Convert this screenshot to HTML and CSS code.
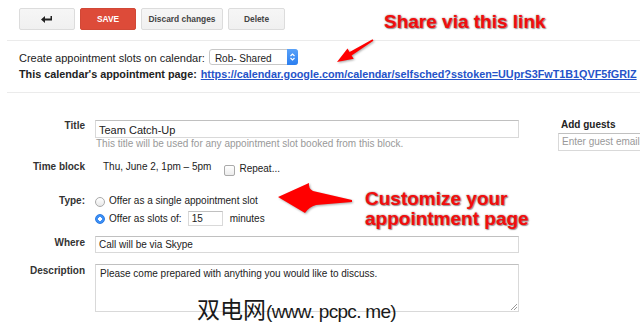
FILE: index.html
```html
<!DOCTYPE html>
<html lang="en">
<head>
    <meta charset="UTF-8" />
    <title>Appointment slots</title>
    <link rel="stylesheet" href="styles.css">
</head>
<body>

    <!-- Toolbar -->
    <div class="toolbar">
        <button class="btn btn-back">
            <svg width="12" height="8" viewBox="0 0 12 8">
                <path d="M0 4.5 L4 1 L4 3.5 L9.5 3.5 L9.5 1 L11 1 L11 5.5 L4 5.5 L4 8 Z" fill="#222"/>
            </svg>
        </button>
        <button class="btn btn-save">SAVE</button>
        <button class="btn btn-discard">Discard changes</button>
        <button class="btn btn-delete">Delete</button>
    </div>

    <!-- Calendar info -->
    <div class="calendar-info">
        <div class="info-row">
            <span>Create appointment slots on calendar:</span>
            <div class="select">
                <span class="select-text">Rob- Shared</span>
                <span class="stepper">
                    <svg width="7" height="10" viewBox="0 0 7 10">
                        <path d="M1.5 4 L3.5 2 L5.5 4 M1.5 6 L3.5 8 L5.5 6" stroke="#fff" stroke-width="1.2" fill="none"/>
                    </svg>
                </span>
            </div>
        </div>
        <div class="info-row">
            <b>This calendar's appointment page:</b>
            <a class="link" href="#">https://calendar.google.com/calendar/selfsched?sstoken=UUprS3FwT1B1QVF5fGRIZ</a>
        </div>
    </div>

    <!-- Form -->
    <div class="form">
        <div class="fields">
            <div class="row row-title">
                <label>Title</label>
                <div>
                    <div class="input input-title">Team Catch-Up</div>
                    <div class="hint">This title will be used for any appointment slot booked from this block.</div>
                </div>
            </div>

            <div class="row row-time">
                <label>Time block</label>
                <div class="time-field">
                    <span class="time-value">Thu, June 2, 1pm – 5pm</span>
                    <span class="checkbox"></span>
                    <span class="repeat">Repeat...</span>
                </div>
            </div>

            <div class="row row-type">
                <label>Type:</label>
                <div>
                    <div class="option option-single">
                        <span class="radio"></span>
                        <span>Offer as a single appointment slot</span>
                    </div>
                    <div class="option option-slots">
                        <span class="radio checked"></span>
                        <span>Offer as slots of:</span>
                        <div class="input input-small">15</div>
                        <span>minutes</span>
                    </div>
                </div>
            </div>

            <div class="row row-where">
                <label>Where</label>
                <div class="input input-where">Call will be via Skype</div>
            </div>

            <div class="row row-desc">
                <label>Description</label>
                <div class="textarea">
                    Please come prepared with anything you would like to discuss.
                    <svg class="grip" width="7" height="7" viewBox="0 0 7 7">
                        <path d="M1 7 L7 1 M4 7 L7 4" stroke="#999" stroke-width="1"/>
                    </svg>
                </div>
            </div>
        </div>

        <div class="guests">
            <div class="guests-title">Add guests</div>
            <div class="input input-guest">Enter guest email</div>
        </div>
    </div>

    <!-- Annotations -->
    <svg class="arrows" width="640" height="331" viewBox="0 0 640 331">
        <path d="M337 62 L347.5 48.6 L349.6 52 L372.6 39.3 L373.4 40.7 L351.6 55.4 L353.7 58.8 Z" fill="#f00"/>
        <path d="M278 197 L309 183 Q308 188 313 191 L352 200 L352 202 L316 205 Q309 207 305 213 Z" fill="#f00"/>
    </svg>
    <div class="note note-share">Share via this link</div>
    <div class="note note-custom">Customize your<br>appointment page</div>

    <div class="watermark">双电网<span class="watermark-url">(www. pcpc. me)</span></div>

</body>
</html>
```

FILE: styles.css
```css
body {
    margin: 0;
    width: 640px;
    height: 331px;
    overflow: hidden;
    position: relative;
    background: #fff;
    color: #222;
    font-family: 'Liberation Sans', Arial, sans-serif;
}

/* Toolbar */
.toolbar {
    display: flex;
    gap: 5px;
    height: 41px;
    box-sizing: border-box;
    margin-left: 7px;
    padding: 8px 0 0 12px;
    border-bottom: 1px solid #ebebeb;
}

.btn {
    height: 22px;
    box-sizing: border-box;
    display: flex;
    align-items: center;
    justify-content: center;
    padding: 0;
    border: 1px solid #dcdcdc;
    border-radius: 2px;
    background: linear-gradient(#f6f6f6, #f0f0f0);
    color: #444;
    font-family: 'Liberation Sans', Arial, sans-serif;
    font-size: 8.4px;
    font-weight: bold;
}

.btn-back { width: 56px; }
.btn-save {
    width: 56px;
    background: #dd4b39;
    border-color: #d14836;
    color: #fff;
}
.btn-discard { width: 82px; }
.btn-delete { width: 57px; }

/* Calendar info */
.calendar-info {
    height: 52px;
    box-sizing: border-box;
    margin-left: 7px;
    padding: 8px 0 0 12px;
    border-bottom: 1px solid #ebebeb;
    font-size: 11px;
    line-height: 16px;
    overflow: hidden;
}

.info-row {
    display: flex;
    align-items: baseline;
    white-space: nowrap;
}

.info-row b {
    font-size: 10.8px;
}

.select {
    display: flex;
    width: 89px;
    height: 16px;
    box-sizing: border-box;
    margin-left: 4px;
    border: 1px solid #c8c8c8;
    border-radius: 3px;
    background: #fff;
    font-size: 10px;
}

.select-text {
    flex: 1;
    padding: 3px 0 0 5px;
    line-height: 12px;
}

.stepper {
    width: 11px;
    margin: -1px -1px -1px 0;
    display: flex;
    align-items: center;
    justify-content: center;
    border-radius: 0 3px 3px 0;
    background: linear-gradient(#5aa2f8, #2a7ef0);
}

.link {
    margin-left: 4px;
    color: #2553c9;
    font-size: 10.8px;
    font-weight: bold;
}

/* Form */
.form {
    display: flex;
    padding-top: 26px;
    font-size: 10px;
}

.fields {
    width: 519px;
}

.row {
    display: grid;
    grid-template-columns: 85px 424px;
    column-gap: 10px;
    align-items: start;
}

.row label {
    text-align: right;
    font-weight: bold;
    color: #333;
    line-height: 11px;
}

.row-title { margin-top: 1px; }
.row-time { margin-top: 11px; }
.row-type { margin-top: 19px; }
.row-where { margin-top: 10px; }
.row-desc { margin-top: 11px; }

.row-where label,
.row-desc label {
    padding-top: 1px;
}

.input {
    box-sizing: border-box;
    border: 1px solid #d9d9d9;
    border-top-color: #c0c0c0;
    background: #fff;
    white-space: nowrap;
    overflow: hidden;
}

.input-title {
    height: 18px;
    padding: 2px 0 0 3px;
    font-size: 11px;
    line-height: 14px;
}

.hint {
    color: #999;
    line-height: 12px;
    padding-left: 1px;
}

.time-field {
    display: flex;
    line-height: 11px;
    padding-left: 8px;
}

.checkbox {
    width: 9px;
    height: 9px;
    margin: 4px 4px 0 13px;
    border: 1px solid #aaa;
    border-radius: 2px;
    background: linear-gradient(#fff, #ececec);
}

.repeat {
    padding-top: 2px;
}

.option {
    display: flex;
    line-height: 11px;
    gap: 4px;
}

.option-single {
    align-items: center;
    height: 11px;
}

.option-single .radio {
    margin-top: 3px;
}

.option-slots {
    align-items: baseline;
    margin-top: 5px;
}

.option-slots .radio {
    align-self: center;
}

.radio {
    width: 10px;
    height: 10px;
    box-sizing: border-box;
    border: 1px solid #aaa;
    border-radius: 50%;
    background: linear-gradient(#fff, #e8e8e8);
    flex-shrink: 0;
}

.radio.checked {
    border-color: #2a7ae2;
    background: radial-gradient(circle, #fff 0 1.6px, #3d8ff5 2px);
}

.input-small {
    width: 35px;
    height: 15px;
    padding-left: 3px;
    margin: 0 3px 0 2px;
    line-height: 13px;
}

.input-where {
    height: 17px;
    padding: 2px 0 0 3px;
    line-height: 12px;
}

.textarea {
    position: relative;
    height: 48px;
    box-sizing: border-box;
    padding: 3px 0 0 4px;
    border: 1px solid #d9d9d9;
    border-top-color: #c0c0c0;
    line-height: 12px;
}

.grip {
    position: absolute;
    right: 1px;
    bottom: 1px;
}

/* Guests */
.guests {
    margin-left: 39px;
}

.guests-title {
    padding-left: 3px;
    font-weight: bold;
    line-height: 11px;
}

.input-guest {
    width: 100px;
    height: 18px;
    margin-top: 3px;
    padding: 2px 0 0 3px;
    line-height: 12px;
    color: #999;
}

/* Annotations */
.arrows {
    position: absolute;
    top: 0;
    left: 0;
    pointer-events: none;
    filter: drop-shadow(1px 1px 1px rgba(0,0,0,0.35));
}

.note {
    position: absolute;
    color: #f20d0d;
    font-size: 19px;
    font-weight: bold;
    line-height: 20px;
    white-space: nowrap;
    text-shadow: 0 0 2px rgba(90,0,0,0.55), 1px 1px 1px rgba(0,0,0,0.35);
}

.note-share {
    left: 384px;
    top: 12px;
}

.note-custom {
    left: 365px;
    top: 189px;
}

.watermark {
    position: absolute;
    left: 197px;
    top: 293px;
    font-family: 'Noto Sans CJK SC', sans-serif;
    font-size: 23px;
    line-height: 30px;
    color: #1a1a1a;
    white-space: nowrap;
}

.watermark-url {
    font-family: 'Liberation Sans', sans-serif;
    font-size: 19px;
    letter-spacing: -0.7px;
}
```
